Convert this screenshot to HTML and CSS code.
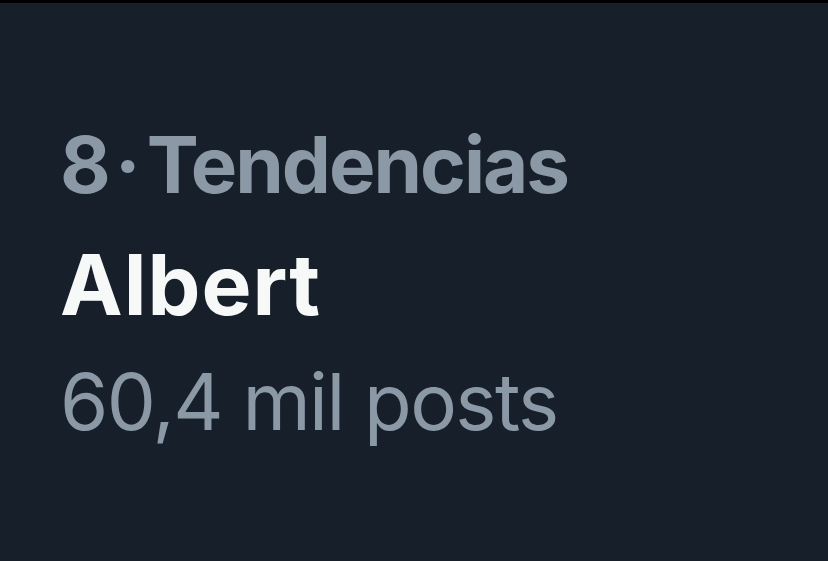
FILE: index.html
```html
<!DOCTYPE html>
<html lang="es">
<head>
<meta charset="utf-8">
<link rel="stylesheet" href="styles.css">
</head>
<body>
<div class="topbar"></div>
<main class="trend">
  <div class="meta">8<span class="dot">·</span>Tendencias</div>
  <div class="name">Albert</div>
  <div class="count">60,4 mil posts</div>
</main>
</body>
</html>
```

FILE: styles.css
```css
html, body {
  margin: 0;
  padding: 0;
  background: #17202a;
  height: 100%;
  overflow: hidden;
}
.topbar {
  height: 3px;
  background: #000;
}
.trend {
  display: flex;
  flex-direction: column;
  gap: 36px;
  padding: 123px 0 0 60px;
  font-family: Inter, "Liberation Sans", sans-serif;
  line-height: 1;
}
.meta {
  font-size: 78px;
  font-weight: 700;
  color: #8b98a5;
  letter-spacing: -2px;
}
.dot {
  margin: 0 8px 0 6px;
}
.name {
  margin-top: 3px;
  font-size: 84px;
  font-weight: 700;
  color: #f7f9f9;
  letter-spacing: 1px;
}
.count {
  font-size: 78px;
  font-weight: 400;
  color: #8b98a5;
  letter-spacing: -1.6px;
}
```
